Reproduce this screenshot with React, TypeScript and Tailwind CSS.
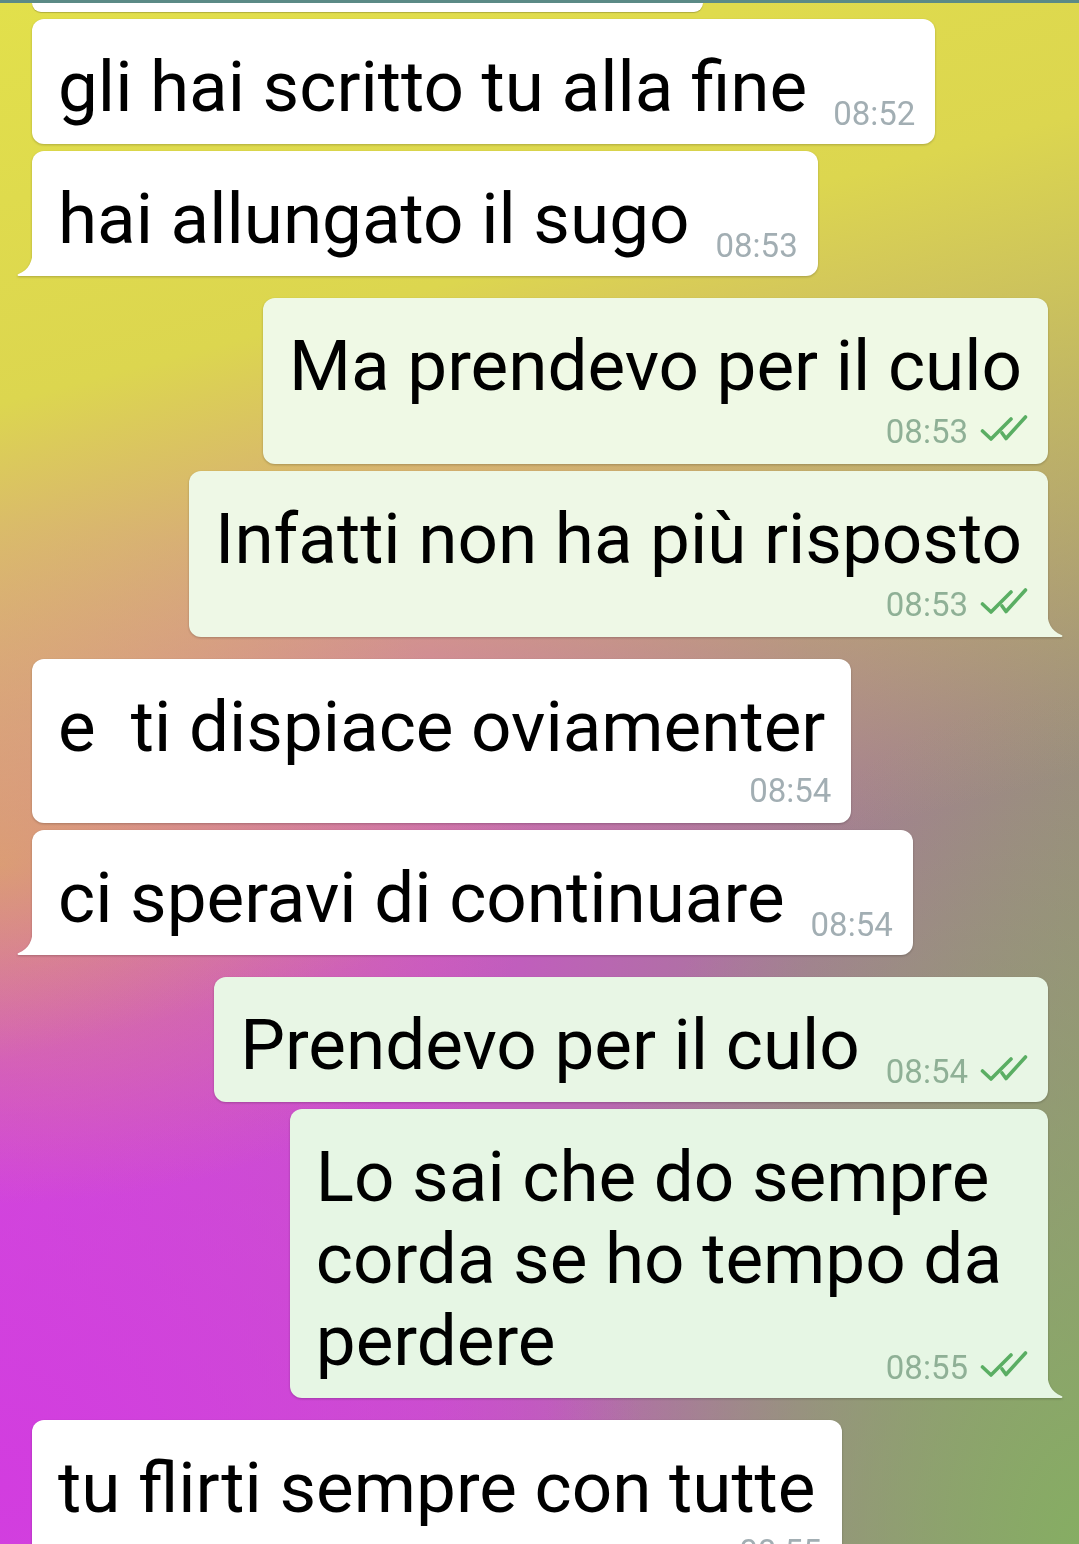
import React from 'react';

type Side = 'in' | 'out';

interface Msg {
    side: Side;
    text: string[];
    time: string;
    mode: 'inline' | 'block' | 'overlap';
    tail?: boolean;
    first?: boolean;
    bg?: string;
}

const messages: Msg[] = [
    { side: 'in', text: ['gli hai scritto tu alla fine'], time: '08:52', mode: 'inline' },
    { side: 'in', text: ['hai allungato il sugo'], time: '08:53', mode: 'inline', tail: true },
    { side: 'out', text: ['Ma prendevo per il culo'], time: '08:53', mode: 'block', first: true, bg: 'bg-[#eff9e5]' },
    { side: 'out', text: ['Infatti non ha più risposto'], time: '08:53', mode: 'block', tail: true, bg: 'bg-[#eef8e6]' },
    { side: 'in', text: ['e  ti dispiace oviamenter'], time: '08:54', mode: 'block', first: true },
    { side: 'in', text: ['ci speravi di continuare'], time: '08:54', mode: 'inline', tail: true },
    { side: 'out', text: ['Prendevo per il culo'], time: '08:54', mode: 'inline', first: true, bg: 'bg-[#e8f6e5]' },
    { side: 'out', text: ['Lo sai che do sempre', 'corda se ho tempo da', 'perdere'], time: '08:55', mode: 'overlap', tail: true, bg: 'bg-[#e6f6e4]' },
    { side: 'in', text: ['tu flirti sempre con tutte'], time: '08:55', mode: 'block', first: true },
];

function Ticks() {
    return (
        <svg width="48" height="27" viewBox="0 0 48 27" fill="none" stroke="#5aae63" strokeWidth="3.6" strokeLinecap="round" strokeLinejoin="round" className="mb-[7px] shrink-0">
            <path d="M2.5 17 L11 25 L31 5" />
            <path d="M22 19 L26 24.5 L45.5 3" />
        </svg>
    );
}

function Meta({ side, time, className = '' }: { side: Side; time: string; className?: string }) {
    return (
        <span className={`flex items-end gap-[12px] ${className}`}>
            <span className={`text-[33px] leading-[32px] ${side === 'out' ? 'text-[#8fb096]' : 'text-[#a2aeb3]'}`}>{time}</span>
            {side === 'out' && <Ticks />}
        </span>
    );
}

function Tail({ side }: { side: Side }) {
    if (side === 'in') {
        return (
            <svg width="18" height="28" viewBox="0 0 18 28" className="absolute left-[-16px] bottom-0">
                <path d="M17 0 C17 13 13 22 2.5 26 Q0.5 27 2.5 28 L18 28 L18 0 Z" fill="#ffffff" />
            </svg>
        );
    }
    return (
        <svg width="18" height="28" viewBox="0 0 18 28" className="absolute right-[-16px] bottom-0">
            <path d="M1 0 C1 13 5 22 15.5 26 Q17.5 27 15.5 28 L0 28 L0 0 Z" fill="currentColor" />
        </svg>
    );
}

const tailColor: Record<string, string> = {
    'bg-[#eef8e6]': 'text-[#eef8e6]',
    'bg-[#e6f6e4]': 'text-[#e6f6e4]',
};

function Bubble({ m }: { m: Msg }) {
    const bg = m.side === 'in' ? 'bg-white' : m.bg ?? 'bg-[#eef8e6]';
    const corner = m.tail ? (m.side === 'in' ? 'rounded-bl-none' : 'rounded-br-none') : '';
    const text = (
        <div className="text-[71px] leading-[82px] text-black whitespace-pre">
            {m.text.map((line, i) => (
                <React.Fragment key={i}>
                    {i > 0 && <br />}
                    {line}
                </React.Fragment>
            ))}
        </div>
    );

    return (
        <div className={`relative ${m.side === 'in' ? 'self-start ml-[32px]' : 'self-end mr-[31px]'} ${m.first ? 'mt-[22px]' : 'mt-[7px]'} drop-shadow-[0_1px_1px_rgba(0,0,0,0.22)] ${tailColor[bg] ?? ''}`}>
            <div className={`${bg} rounded-[12px] ${corner} pl-[26px] pr-[20px] pt-[27px] pb-[16px]`}>
                {m.mode === 'inline' && (
                    <div className="flex items-end">
                        {text}
                        <Meta side={m.side} time={m.time} className="ml-[26px] mb-[-2px]" />
                    </div>
                )}
                {m.mode === 'block' && (
                    <>
                        <div className="pr-[6px]">{text}</div>
                        <div className="flex justify-end mt-[7px]">
                            <Meta side={m.side} time={m.time} />
                        </div>
                    </>
                )}
                {m.mode === 'overlap' && (
                    <div className="grid">
                        <div className="col-start-1 row-start-1 pr-[26px]">{text}</div>
                        <Meta side={m.side} time={m.time} className="col-start-1 row-start-1 self-end justify-self-end mb-[-2px]" />
                    </div>
                )}
            </div>
            {m.tail && <Tail side={m.side} />}
        </div>
    );
}

export default function App() {
    return (
        <div className="relative h-[1544px] w-full overflow-hidden font-['Roboto',sans-serif] bg-[linear-gradient(165deg,#e2e04b_0%,#dcd64f_22%,rgba(220,205,85,0)_58%),radial-gradient(ellipse_50%_22%_at_0%_56%,#da8486_0%,rgba(218,132,134,0)_100%),radial-gradient(ellipse_60%_36%_at_0%_96%,#d23ddf_0%,rgba(210,61,223,0)_100%),radial-gradient(ellipse_50%_55%_at_100%_100%,#86ad63_0%,rgba(134,173,99,0)_100%),linear-gradient(to_right,#d14adb_0%,#c855c8_40%,#a67c96_75%,#9c8c80_100%)]">
            <div className="flex flex-col">
                <div className="h-[3px] w-full bg-[#5b8a86]" />
                <div className="ml-[32px] w-[671px] h-[9px] bg-white rounded-b-[12px] shadow-[0_1px_1px_rgba(0,0,0,0.22)]" />
                {messages.map((m, i) => (
                    <Bubble key={i} m={m} />
                ))}
            </div>
        </div>
    );
}
